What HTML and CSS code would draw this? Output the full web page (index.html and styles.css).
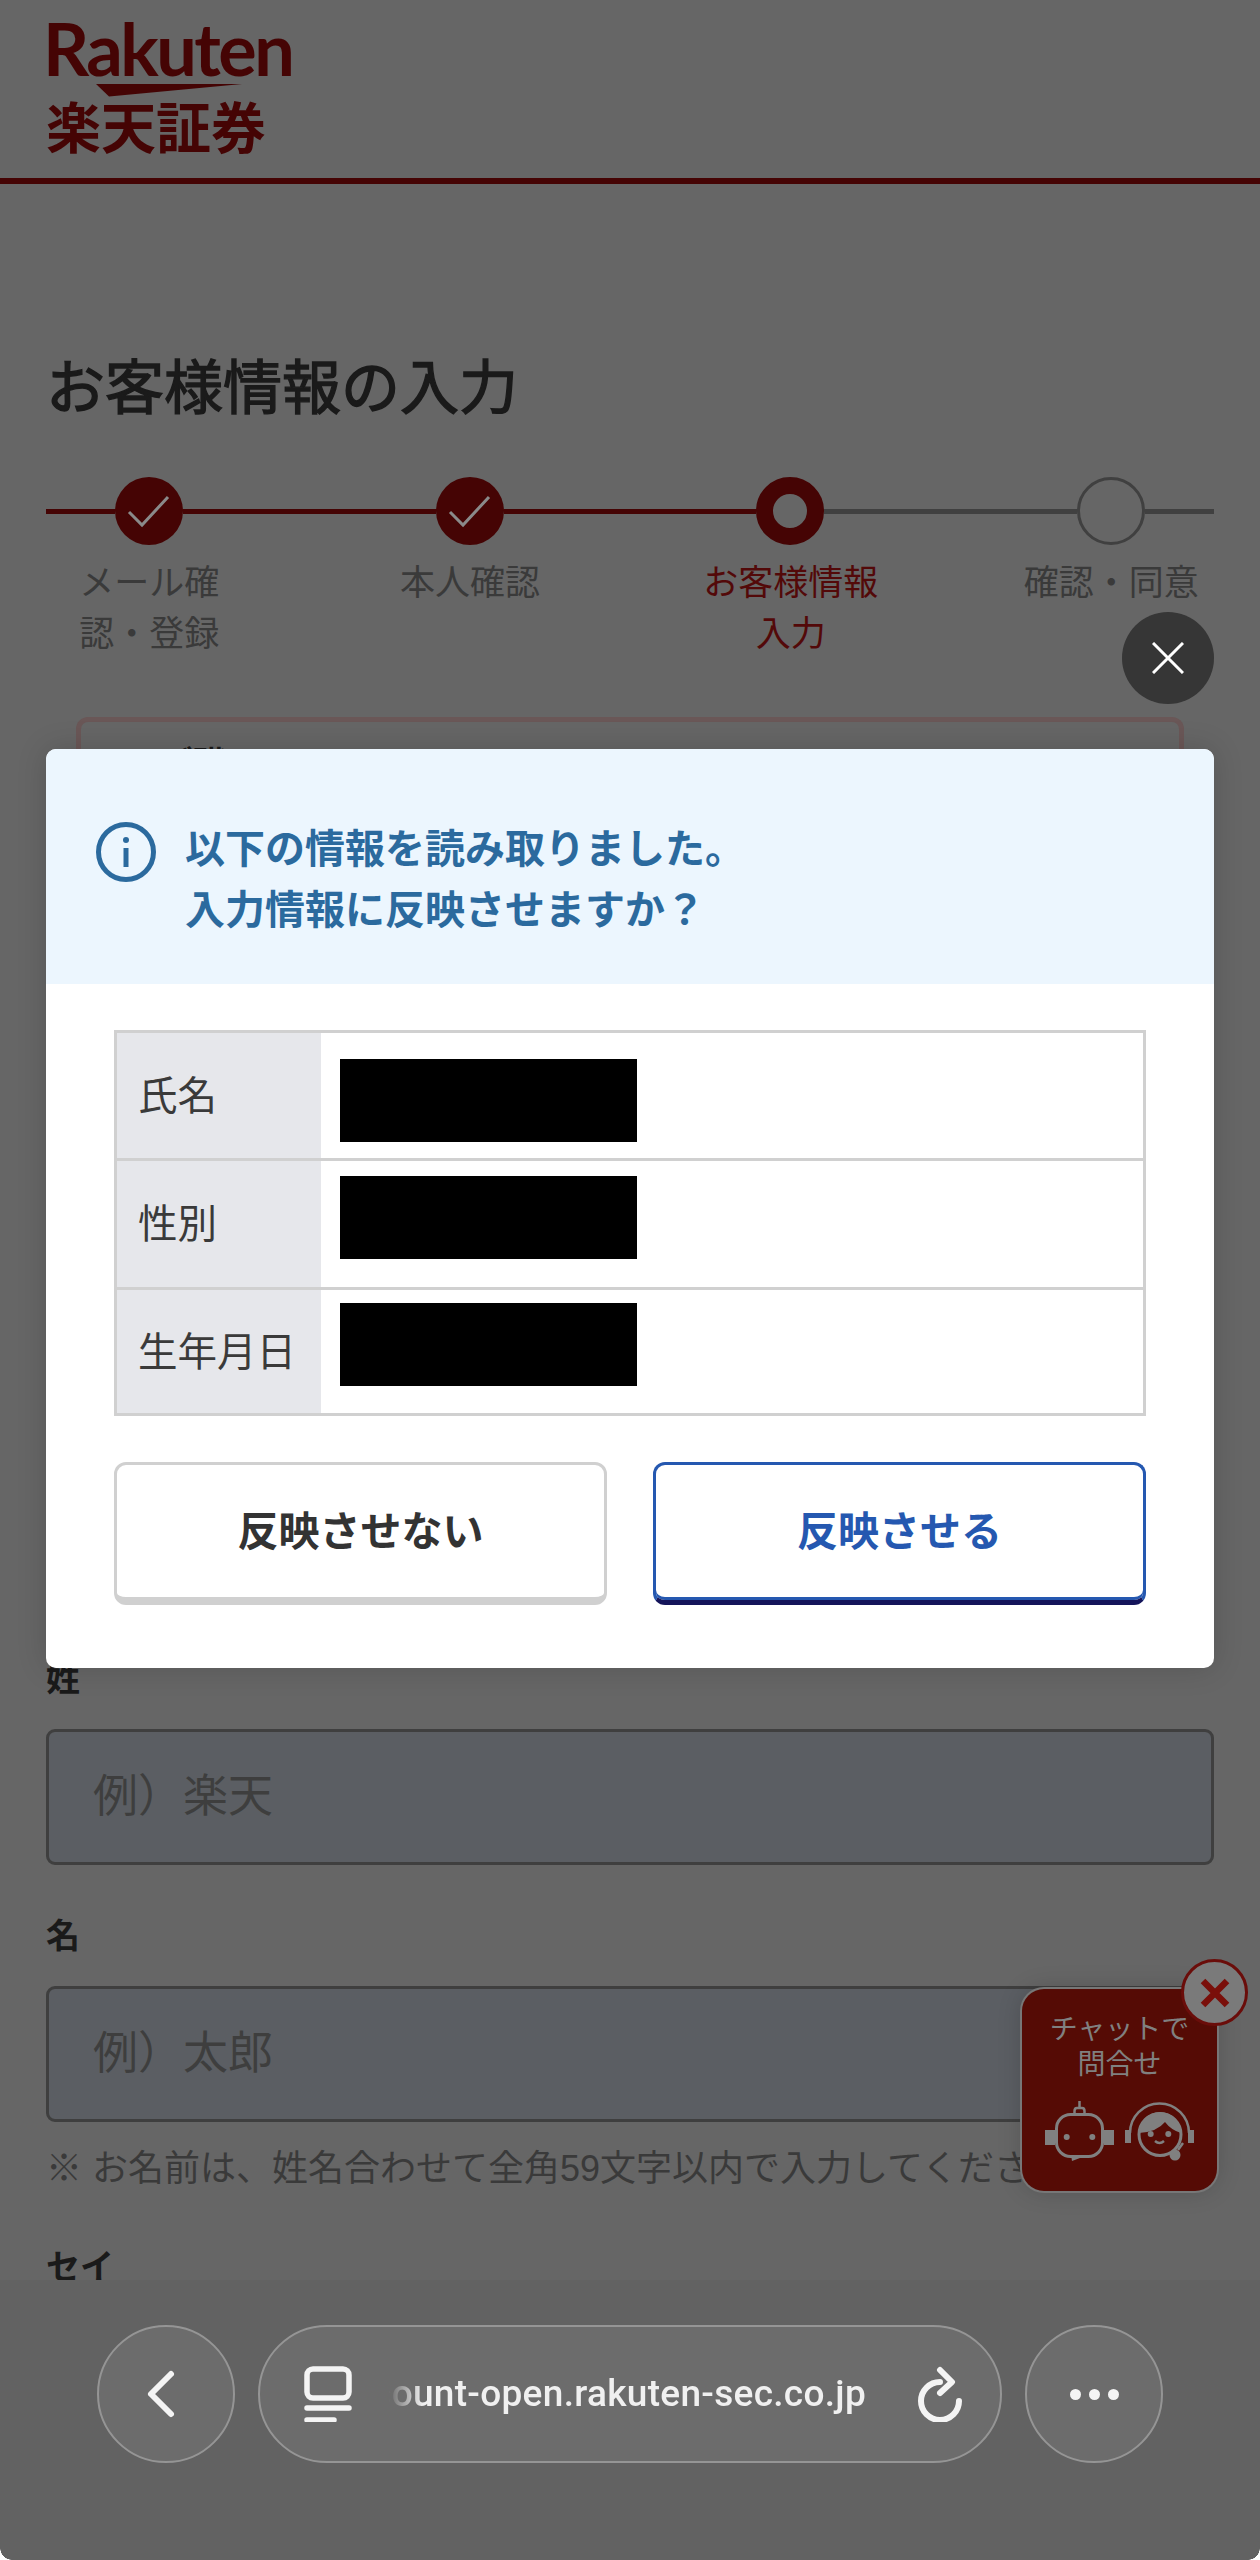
FILE: index.html
```html
<!DOCTYPE html>
<html lang="ja">

<head>
    <meta charset="utf-8">
    <title>お客様情報の入力</title>
    <link rel="stylesheet" href="styles.css">
</head>

<body>
    <header class="site-header">
        <div class="logo-word">Rakuten</div>
        <svg class="logo-mark" width="146" height="13" viewBox="0 0 146 13"><polygon points="0,0 146,0 13,12.5"/></svg>
        <div class="logo-sub">楽天証券</div>
    </header>

    <main class="content">
        <h1 class="page-title">お客様情報の入力</h1>

        <div class="step-track">
            <span class="seg seg-done seg-end"></span>
            <span class="dot dot-done">
                <svg width="68" height="68" viewBox="0 0 68 68"><polyline points="14,35 27,48 53,20"/></svg>
            </span>
            <span class="seg seg-done"></span>
            <span class="dot dot-done">
                <svg width="68" height="68" viewBox="0 0 68 68"><polyline points="14,35 27,48 53,20"/></svg>
            </span>
            <span class="seg seg-done"></span>
            <span class="dot dot-current"></span>
            <span class="seg"></span>
            <span class="dot"></span>
            <span class="seg seg-end"></span>
        </div>
        <div class="step-labels">
            <div>メール確<br>認・登録</div>
            <div>本人確認</div>
            <div class="label-current">お客様情報<br>入力</div>
            <div>確認・同意</div>
        </div>

        <section class="notice-card">
            <p>ご職</p>
        </section>

        <label class="field-label first-label">姓</label>
        <input class="field-input" type="text" placeholder="例）楽天">

        <label class="field-label">名</label>
        <input class="field-input" type="text" placeholder="例）太郎">
        <p class="field-note">※ お名前は、姓名合わせて全角59文字以内で入力してください。</p>

        <label class="field-label kana-label">セイ</label>
    </main>

    <aside class="chat-box">
        <span class="chat-close">
            <svg width="30" height="30" viewBox="0 0 30 30"><path d="M3 3 L27 27 M27 3 L3 27"/></svg>
        </span>
        <div class="chat-text">チャットで<br>問合せ</div>
        <svg class="chat-icons" width="170" height="75" viewBox="0 0 170 75">
            <!-- robot -->
            <rect class="ink-line" x="21.5" y="19.5" width="46" height="42" rx="14"/>
            <rect class="ink" x="10" y="35" width="10" height="15"/>
            <rect class="ink" x="69" y="35" width="10" height="15"/>
            <path class="ink-thin" d="M44.5 6 V13 M39.5 19 V16 Q39.5 13 42 13 H47 Q49.5 13 49.5 16 V19"/>
            <circle class="ink" cx="31.7" cy="42" r="3"/>
            <circle class="ink" cx="57.3" cy="42" r="3"/>
            <polygon class="ink" points="36,60 53,60 37,66"/>
            <!-- operator -->
            <path class="ink-thin" d="M95 38 A29.5 29.5 0 0 1 154 38"/>
            <rect class="ink" x="90" y="35" width="6" height="13"/>
            <rect class="ink" x="153" y="35" width="6" height="13"/>
            <circle class="ink-line" cx="125" cy="39.5" r="21"/>
            <path class="ink" d="M104 38 A21 21 0 0 1 146 38 Q136 35 130 27 Q122 37 104 38 Z"/>
            <circle class="ink" cx="115.7" cy="39" r="3"/>
            <circle class="ink" cx="133.3" cy="39" r="3"/>
            <path class="ink-thin" d="M120 46 Q124.5 50 129 46"/>
            <path class="ink-thin" d="M143 55 L148 48"/>
            <circle class="ink" cx="140" cy="60" r="5.5"/>
        </svg>
    </aside>

    <button class="dialog-close" type="button">
        <svg width="32" height="32" viewBox="0 0 32 32"><path d="M1 1 L31 31 M31 1 L1 31"/></svg>
    </button>

    <div class="dialog">
        <div class="dialog-head">
            <svg class="info-icon" width="60" height="60" viewBox="0 0 60 60">
                <circle cx="30" cy="30" r="27.5"/>
                <path d="M30 26 V45"/>
                <circle class="info-dot" cx="30" cy="18" r="3"/>
            </svg>
            <p>以下の情報を読み取りました。<br>入力情報に反映させますか？</p>
        </div>
        <div class="dialog-body">
            <table class="read-table">
                <tr>
                    <th>氏名</th>
                    <td><div class="redact"></div></td>
                </tr>
                <tr>
                    <th>性別</th>
                    <td><div class="redact"></div></td>
                </tr>
                <tr>
                    <th>生年月日</th>
                    <td><div class="redact"></div></td>
                </tr>
            </table>
            <div class="dialog-actions">
                <button class="btn" type="button">反映させない</button>
                <button class="btn btn-primary" type="button">反映させる</button>
            </div>
        </div>
    </div>

    <nav class="browser-bar">
        <span class="glass glass-round">
            <svg class="bar-icon back-icon" width="34" height="52" viewBox="0 0 34 52"><polyline points="26,6 6,26 26,46"/></svg>
        </span>
        <div class="glass url-pill">
            <svg class="bar-icon tabs-icon" width="48" height="56" viewBox="0 0 48 56">
                <rect x="3" y="3" width="42" height="29" rx="6"/>
                <path d="M3 42 H45 M3 54 H30"/>
            </svg>
            <div class="url-clip"><span>account-open.rakuten-sec.co.jp</span></div>
            <svg class="bar-icon reload-icon" width="48" height="56" viewBox="0 0 48 56">
                <path d="M24 16 A19 19 0 1 0 43 35"/>
                <polyline points="24,4 36,16 24,27"/>
            </svg>
        </div>
        <span class="glass glass-round menu-dots">
            <i></i><i></i><i></i>
        </span>
    </nav>
</body>
</html>
```

FILE: styles.css
```css
* {
    margin: 0;
    padding: 0;
    box-sizing: border-box;
}

html, body {
    width: 1260px;
    height: 2560px;
    overflow: hidden;
}

body {
    position: relative;
    background: #666;
    color: #3a3a3a;
    font-family: "Liberation Sans", "Noto Sans CJK JP", sans-serif;
}

/* header */
.site-header {
    height: 184px;
    padding: 13px 0 0 46px;
    border-bottom: 6px solid #450404;
    color: #450404;
}

.logo-word {
    margin-left: -3px;
    font-family: "Lato", sans-serif;
    font-size: 72px;
    font-weight: 700;
    line-height: 70px;
    letter-spacing: -2.5px;
}

.logo-mark {
    display: block;
    margin: 1px 0 0 50px;
    fill: #450404;
}

.logo-sub {
    margin-top: 0;
    font-size: 55px;
    font-weight: 700;
    line-height: 64px;
}

/* page */
.content {
    padding: 0 46px;
}

.page-title {
    margin-top: 162px;
    font-size: 59px;
    font-weight: 400;
    line-height: 86px;
    color: #1a1a1a;
    -webkit-text-stroke: 1.4px #1a1a1a;
}

.step-track {
    display: flex;
    align-items: center;
    margin-top: 45px;
}

.seg {
    flex: 1;
    height: 5px;
    background: #404040;
}

.seg-done {
    background: #450404;
}

.seg-end {
    flex: 0 0 69px;
}

.dot {
    flex: none;
    width: 68px;
    height: 68px;
    border: 3px solid #404040;
    border-radius: 50%;
}

.dot-done {
    border: 0;
    background: #450404;
}

.dot-done svg {
    display: block;
    fill: none;
    stroke: #8a8a8a;
    stroke-width: 3;
}

.dot-current {
    border: 17px solid #450404;
}

.step-labels {
    display: grid;
    grid-template-columns: repeat(4, 320.67px);
    margin: 12px 0 0 -57px;
    font-size: 35px;
    line-height: 51px;
    text-align: center;
    white-space: nowrap;
}

.label-current {
    color: #530909;
}

.notice-card {
    height: 918px;
    margin: 58px 30px 0;
    padding: 17px 0 0 78px;
    border: 5px solid #6a5757;
    border-bottom: 0;
    border-radius: 12px 12px 0 0;
    font-size: 34px;
    font-weight: 700;
    line-height: 50px;
    color: #1a1a1a;
}

.field-label {
    display: block;
    font-size: 34px;
    font-weight: 700;
    line-height: 50px;
    color: #1a1a1a;
}

.first-label {
    margin-top: 19px;
}

.field-input {
    display: block;
    width: 1168px;
    height: 136px;
    margin-top: 25px;
    padding-left: 44px;
    background: #5b5e63;
    border: 3px solid #3f3f3f;
    border-radius: 9px;
    font-family: inherit;
    font-size: 45px;
}

.field-input::placeholder {
    color: #3e3e3e;
    opacity: 1;
}

.field-input + .field-label {
    margin-top: 46px;
}

.field-note {
    margin-top: 22px;
    font-size: 36px;
    line-height: 50px;
    white-space: nowrap;
}

.kana-label {
    margin-top: 48px;
}

/* floating chat */
.chat-box {
    position: absolute;
    left: 1022px;
    top: 1989px;
    width: 195px;
    height: 202px;
    padding-top: 23px;
    background: #550b05;
    border-radius: 22px;
    box-shadow: 0 0 0 2px #777, 0 0 24px rgba(0, 0, 0, .18);
    color: #808080;
    font-size: 28px;
    line-height: 35px;
    text-align: center;
}

.chat-close {
    position: absolute;
    left: 159px;
    top: -30px;
    display: flex;
    align-items: center;
    justify-content: center;
    width: 67px;
    height: 67px;
    background: #7a7a7a;
    border: 3px solid #6a0d0a;
    border-radius: 50%;
}

.chat-close svg {
    fill: none;
    stroke: #7a0f0a;
    stroke-width: 6.5;
}

.chat-icons {
    display: block;
    margin: 13px 0 0 13px;
}

.ink {
    fill: #808080;
}

.ink-line {
    fill: none;
    stroke: #808080;
    stroke-width: 3;
}

.ink-thin {
    fill: none;
    stroke: #808080;
    stroke-width: 2.5;
}

/* dialog */
.dialog-close {
    position: absolute;
    left: 1122px;
    top: 612px;
    display: flex;
    align-items: center;
    justify-content: center;
    width: 92px;
    height: 92px;
    background: #363636;
    border: 0;
    border-radius: 50%;
}

.dialog-close svg {
    fill: none;
    stroke: #fff;
    stroke-width: 3;
}

.dialog {
    position: absolute;
    left: 46px;
    top: 749px;
    width: 1168px;
    height: 919px;
    overflow: hidden;
    background: #fff;
    border-radius: 10px;
    box-shadow: 0 0 30px rgba(0, 0, 0, .16);
}

.dialog-head {
    display: flex;
    align-items: flex-start;
    gap: 29px;
    height: 235px;
    padding: 70px 0 0 50px;
    background: #ecf6fe;
    color: #2b6a9e;
    font-size: 40px;
    font-weight: 700;
    line-height: 61px;
}

.info-icon {
    flex: none;
    margin-top: 3px;
    fill: none;
    stroke: #2b6a9e;
    stroke-width: 5;
}

.info-dot {
    fill: #2b6a9e;
    stroke: none;
}

.dialog-body {
    padding: 46px 68px 0;
}

.read-table {
    width: 1032px;
    border: 3px solid #d0d0d0;
    border-spacing: 0;
    table-layout: fixed;
}

.read-table th {
    width: 204px;
    height: 125px;
    padding-left: 21px;
    background: #e6e7eb;
    font-size: 39.5px;
    font-weight: 400;
    line-height: 50px;
    text-align: left;
    white-space: nowrap;
}

.read-table td {
    vertical-align: top;
    padding: 26px 0 0 19px;
}

.read-table tr + tr th,
.read-table tr + tr td {
    height: 129px;
    border-top: 3px solid #d0d0d0;
}

.read-table tr:nth-child(2) td {
    padding-top: 15px;
}

.read-table tr:nth-child(3) th,
.read-table tr:nth-child(3) td {
    height: 126px;
}

.read-table tr:nth-child(3) td {
    padding-top: 13px;
}

.redact {
    width: 297px;
    height: 83px;
    background: #000;
}

.dialog-actions {
    display: flex;
    gap: 46px;
    margin-top: 46px;
}

.btn {
    flex: 1;
    height: 143px;
    padding-bottom: 6px;
    background: #fff;
    border: 3px solid #d0d0d0;
    border-bottom-width: 8px;
    border-radius: 12px;
    color: #333;
    font-family: inherit;
    font-size: 41px;
    font-weight: 700;
}

.btn-primary {
    border-color: #2558b0;
    border-bottom-color: #14145a;
    border-bottom-width: 5px;
    padding-bottom: 9px;
    box-shadow: inset 0 -3px 0 #2558b0;
    color: #2558b0;
}

/* browser bar */
.browser-bar {
    position: absolute;
    left: 0;
    top: 2280px;
    display: flex;
    gap: 23px;
    width: 1260px;
    height: 280px;
    padding: 45px 0 0 97px;
    background: #626262;
}

.browser-bar::before,
.browser-bar::after {
    content: "";
    position: absolute;
    bottom: 0;
    width: 12px;
    height: 12px;
}

.browser-bar::before {
    left: 0;
    background: radial-gradient(circle at 100% 0, transparent 11.5px, #fff 12px);
}

.browser-bar::after {
    right: 0;
    background: radial-gradient(circle at 0 0, transparent 11.5px, #fff 12px);
}

.glass {
    display: flex;
    align-items: center;
    height: 138px;
    background: #6c6c6c;
    border: 2px solid #959595;
    border-radius: 69px;
}

.glass-round {
    justify-content: center;
    width: 138px;
}

.bar-icon {
    flex: none;
    fill: none;
    stroke: #f4f4f4;
    stroke-width: 6;
    stroke-linecap: round;
    stroke-linejoin: round;
}

.back-icon {
    margin-right: 8px;
}

.url-pill {
    width: 744px;
    padding-left: 44px;
}

.tabs-icon {
    stroke-width: 5.5;
}

.url-clip {
    display: flex;
    justify-content: flex-end;
    width: 477px;
    margin-left: 37px;
    overflow: hidden;
    color: #f0f0f0;
    font-family: "Roboto", sans-serif;
    font-size: 37px;
    font-weight: 500;
    line-height: 50px;
    letter-spacing: .3px;
    white-space: nowrap;
    mask-image: linear-gradient(to right, transparent, #000 34px);
}

.reload-icon {
    margin-left: 50px;
}

.menu-dots {
    gap: 8px;
}

.menu-dots i {
    width: 11px;
    height: 11px;
    background: #f4f4f4;
    border-radius: 50%;
}
```
